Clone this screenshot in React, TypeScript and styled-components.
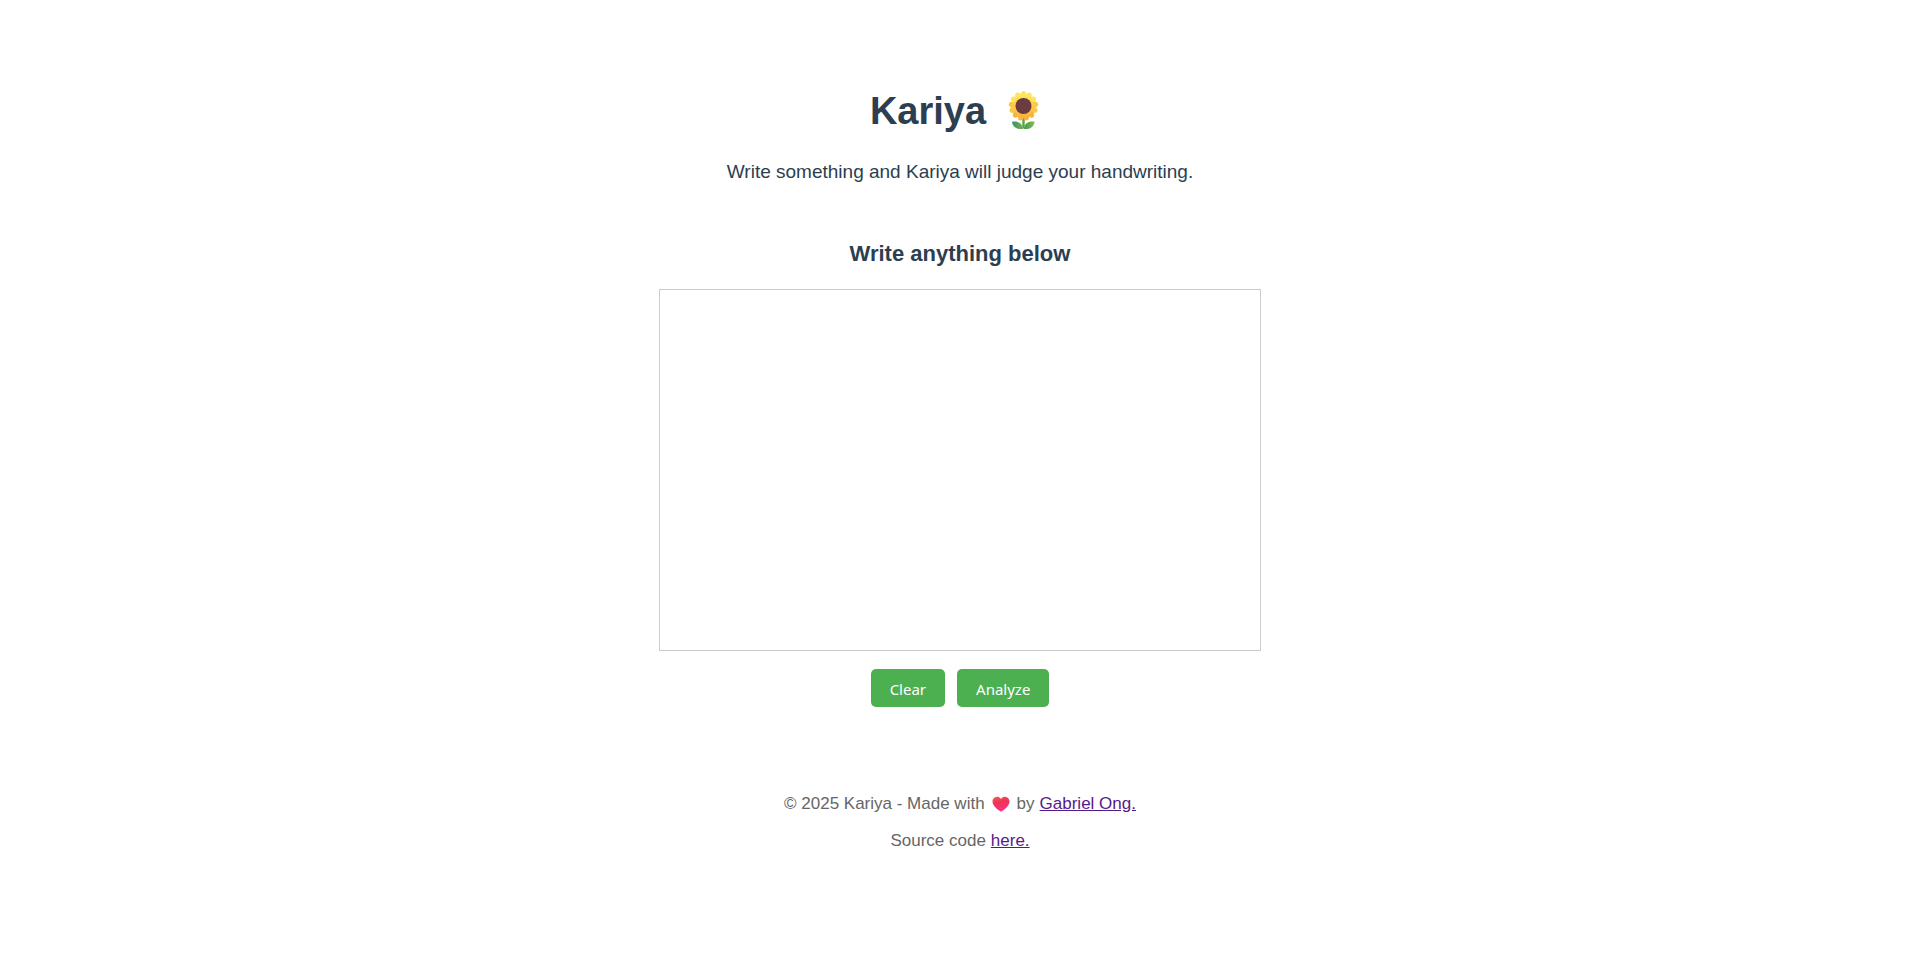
import React, { useRef } from "react";
import styled, { createGlobalStyle } from "styled-components";

const GlobalStyle = createGlobalStyle`
  body {
    margin: 0;
    background: #ffffff;
    color: #2c3e50;
    font-family: "Liberation Sans", Arial, sans-serif;
    font-size: 17px;
    -webkit-font-smoothing: antialiased;
  }
`;

const Page = styled.div`
  display: flex;
  flex-direction: column;
  align-items: center;
  padding: 81px 20px 80px;
  text-align: center;
`;

const Title = styled.h1`
  display: flex;
  align-items: center;
  gap: 22px;
  margin: 0;
  padding-right: 10px;
  font-size: 38px;
  line-height: 60px;
`;

const Intro = styled.p`
  margin: 19px 0 0;
  font-size: 19px;
  line-height: 24px;
`;

const Heading = styled.h2`
  margin: 56px 0 0;
  font-size: 22px;
  line-height: 28px;
`;

const Pad = styled.canvas`
  max-width: 100%;
  margin-top: 21px;
  border: 1px solid #cccccc;
  cursor: crosshair;
`;

const Actions = styled.div`
  display: flex;
  gap: 12px;
  margin-top: 18px;
`;

const Button = styled.button`
  padding: 9px 19px 7px;
  border: 0;
  border-radius: 5px;
  background: #4caf50;
  color: #ffffff;
  font-family: "Noto Sans", sans-serif;
  font-size: 15px;
  line-height: 22px;
  cursor: pointer;
`;

const Footer = styled.footer`
  margin-top: 87px;
  color: #666666;
`;

const Line = styled.p`
  display: flex;
  justify-content: center;
  align-items: center;
  gap: 5px;
  margin: 0 0 17px;
  line-height: 20px;
`;

const Link = styled.a`
  color: #551a8b;
`;

const FlowerIcon = styled.svg`
  margin-bottom: 2px;
`;

const HeartIcon = styled.svg`
  margin: 0 2px;
`;

const petals = Array.from({ length: 13 }, (_, i) => (i * 360) / 13);

function Sunflower() {
  return (
    <FlowerIcon width="32" height="38" viewBox="0 0 32 38" role="img" aria-label="sunflower">
      <defs>
        <linearGradient id="petal" x1="0" y1="0" x2="0" y2="30" gradientUnits="userSpaceOnUse">
          <stop offset="0" stopColor="#ffee60" />
          <stop offset="0.5" stopColor="#fbcd4a" />
          <stop offset="1" stopColor="#f5a83b" />
        </linearGradient>
        <linearGradient id="leafLeft" x1="0" y1="0" x2="1" y2="0">
          <stop offset="0" stopColor="#3a9460" />
          <stop offset="1" stopColor="#78ad52" />
        </linearGradient>
        <linearGradient id="leafRight" x1="0" y1="0" x2="1" y2="0">
          <stop offset="0" stopColor="#449c48" />
          <stop offset="1" stopColor="#8ab957" />
        </linearGradient>
        <pattern id="seeds" width="4" height="4" patternUnits="userSpaceOnUse">
          <circle cx="1" cy="1" r="0.8" fill="#855052" />
          <circle cx="3" cy="3" r="0.8" fill="#855052" />
        </pattern>
      </defs>
      <path d="M15.5 26V37.5" stroke="#52a844" strokeWidth="2.4" />
      <path d="M15 38C9 38.6 4.6 36 4 30.8C10 29.8 14.5 32 15 38Z" fill="url(#leafLeft)" />
      <path d="M16 38C22 38.6 26 36 26.6 30.8C21 29.8 16.5 32 16 38Z" fill="url(#leafRight)" />
      <g fill="url(#petal)">
        <circle cx="15.5" cy="15" r="11.6" />
        {petals.map((angle) => (
          <path
            key={angle}
            d="M12.3 5C12.4 2.2 13.6 .1 15.5 .1S18.6 2.2 18.7 5Z"
            transform={`rotate(${angle} 15.5 15)`}
            fill={angle > 125 && angle < 235 ? "#f7b540" : angle > 60 && angle < 300 ? "#fbc848" : "#ffe55b"}
          />
        ))}
      </g>
      <circle cx="15.5" cy="15" r="8" fill="#68383f" />
      <circle cx="15.5" cy="15" r="7" fill="url(#seeds)" opacity="0.6" />
    </FlowerIcon>
  );
}

function Heart() {
  return (
    <HeartIcon width="18" height="16" viewBox="0 0 18 16" role="img" aria-label="love">
      <defs>
        <linearGradient id="love" x1="0" y1="0" x2="0.3" y2="1">
          <stop offset="0" stopColor="#f35a50" />
          <stop offset="0.45" stopColor="#ee3554" />
          <stop offset="1" stopColor="#ff2f83" />
        </linearGradient>
      </defs>
      <path
        d="M9 3.1C10.2 1.2 12 .7 13.7.9C16.2 1.2 17.8 3.3 17.5 6C17.1 9.8 12.5 13.8 9.7 15.3C9.2 15.6 8.8 15.6 8.3 15.3C5.5 13.8 .9 9.8 .5 6C.2 3.3 1.8 1.2 4.3.9C6 .7 7.8 1.2 9 3.1Z"
        fill="url(#love)"
      />
    </HeartIcon>
  );
}

export default function App() {
  const pad = useRef<HTMLCanvasElement>(null);
  const drawing = useRef(false);

  const trace = (e: React.PointerEvent<HTMLCanvasElement>, start: boolean) => {
    const ctx = pad.current?.getContext("2d");
    if (!ctx) return;
    const { offsetX, offsetY } = e.nativeEvent;
    if (start) {
      drawing.current = true;
      ctx.beginPath();
      ctx.moveTo(offsetX, offsetY);
    } else if (drawing.current) {
      ctx.lineTo(offsetX, offsetY);
      ctx.stroke();
    }
  };

  const stop = () => {
    drawing.current = false;
  };

  const clear = () => {
    pad.current?.getContext("2d")?.clearRect(0, 0, pad.current.width, pad.current.height);
  };

  return (
    <>
      <GlobalStyle />
      <Page>
        <Title>
          Kariya
          <Sunflower />
        </Title>
        <Intro>Write something and Kariya will judge your handwriting.</Intro>
        <Heading>Write anything below</Heading>
        <Pad
          ref={pad}
          width={600}
          height={360}
          onPointerDown={(e) => trace(e, true)}
          onPointerMove={(e) => trace(e, false)}
          onPointerUp={stop}
          onPointerLeave={stop}
        />
        <Actions>
          <Button type="button" onClick={clear}>Clear</Button>
          <Button type="button">Analyze</Button>
        </Actions>
        <Footer>
          <Line>
            <span>© 2025 Kariya - Made with</span>
            <Heart />
            <span>by</span>
            <Link href="#author">Gabriel Ong.</Link>
          </Line>
          <Line>
            <span>Source code</span>
            <Link href="#source">here.</Link>
          </Line>
        </Footer>
      </Page>
    </>
  );
}
